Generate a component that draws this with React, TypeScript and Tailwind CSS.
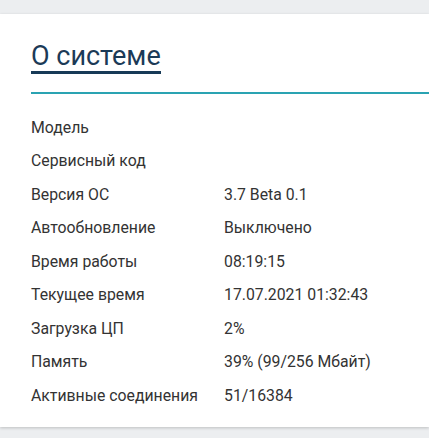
import React from 'react';

const rows: [string, string][] = [
  ['Модель', ''],
  ['Сервисный код', ''],
  ['Версия ОС', '3.7 Beta 0.1'],
  ['Автообновление', 'Выключено'],
  ['Время работы', '08:19:15'],
  ['Текущее время', '17.07.2021 01:32:43'],
  ['Загрузка ЦП', '2%'],
  ['Память', '39% (99/256 Мбайт)'],
  ['Активные соединения', '51/16384'],
];

function App() {
  return (
    <div className="min-h-[438px] bg-[#eceef0] pt-[14px] pb-[12px] font-['Roboto',sans-serif]">
      <div className="bg-white shadow-[0_1px_3px_rgba(0,0,0,0.2)] pl-[31px] pt-[28px] pb-[14px]">
        <div className="flex">
          <h2 className="text-[27px] leading-[28px] font-normal text-[#1b3a57] border-b-[3px] border-[#173a57] pb-[1px]">
            О системе
          </h2>
        </div>
        <div className="mt-[18px] h-[2px] bg-[#2aa3b2]" />
        <div className="mt-[17px] text-[15.8px] font-normal text-[#333]">
          {rows.map(([label, value]) => (
            <div key={label} className="flex h-[33.5px] items-center">
              <div className="w-[193px]">{label}</div>
              <div>{value}</div>
            </div>
          ))}
        </div>
      </div>
    </div>
  );
}

export default App;
